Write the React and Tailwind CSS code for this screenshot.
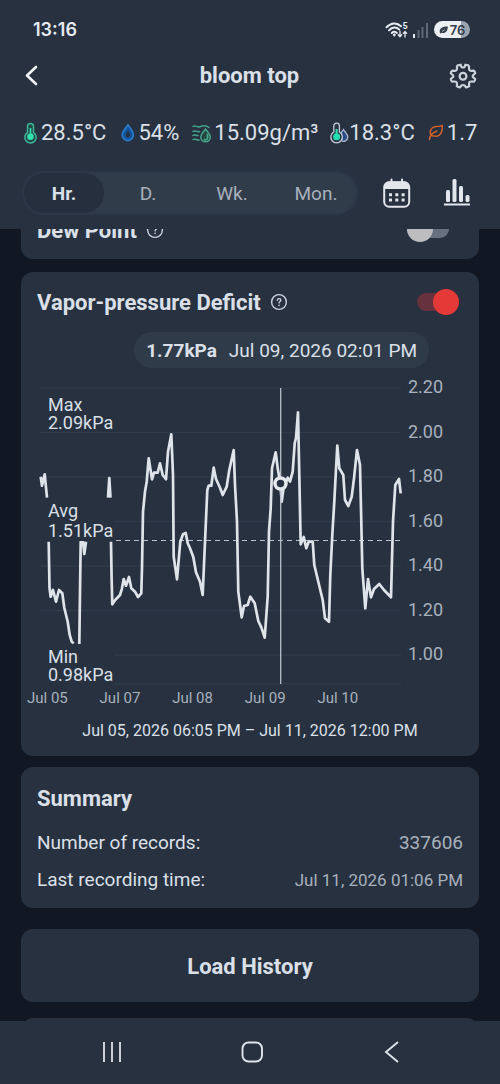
import React from "react";

const Thermometer = () => (
  <svg width="16" height="22" viewBox="0 0 16 22" fill="none">
    <path d="M5.500 10.500V4.500a3 3 0 0 1 6 0v6a5.700 5.700 0 1 1-6 0Z" fill="#1f4a4a" stroke="#3fb393" strokeWidth="1.500" />
    <circle cx="8.500" cy="14.800" r="3.300" fill="#35e0ae" />
    <path d="M8.500 6v8" stroke="#35e0ae" strokeWidth="1.600" />
  </svg>
);

const Drop = () => (
  <svg width="16" height="22" viewBox="0 0 16 22" fill="none">
    <path d="M9 3c2.500 3.500 5.300 6.500 5.300 10a5.500 5.500 0 0 1-11 0C3.300 9.500 6.500 6.500 9 3Z" fill="#15549a" stroke="#2579c9" strokeWidth="1.800" />
    <path d="M9 8.500c1.200 2 2.300 3 2.300 4.600a2.300 2.300 0 0 1-4.600 0c0-1.600 1.100-2.600 2.300-4.600Z" fill="#243245" />
  </svg>
);

const AirMoisture = () => (
  <svg width="19" height="22" viewBox="0 0 19 22" fill="none" stroke="#46a18b" strokeWidth="1.500" strokeLinecap="round">
    <path d="M1 4.500c2.500-1.800 4 1.200 7 .3s5-2.600 9 .7" />
    <path d="M1 9.500c2-1.500 3.500.8 6.500 0" />
    <path d="M1 13.500c1.800-1.300 3 .6 5 0" />
    <path d="M1 17.500c1.800-1.300 3.500.8 6 .6" />
    <path d="M13.500 7c2 3 4.800 5 4.800 8a4.700 4.700 0 0 1-9.600 0c0-3 2.800-5 4.800-8Z" fill="#26463f" />
    <path d="M15.500 12.500v4a2 2 0 0 1-3 1" strokeWidth="1.800" />
  </svg>
);

const DewPointIcon = () => (
  <svg width="15" height="22" viewBox="0 0 15 22" fill="none" className="overflow-visible">
    <path d="M12.500 7.500c2 3 4.300 5 4.300 7.500a4.300 4.300 0 0 1-7 3.300V11c1-1.200 2-2.300 2.700-3.500Z" fill="#2b4d86" stroke="#aebbd0" strokeWidth="1.300" />
    <path d="M2.800 10V4a2.800 2.800 0 0 1 5.600 0v6a5.800 5.800 0 1 1-5.600 0Z" fill="#263445" stroke="#c5ccd6" strokeWidth="1.300" />
    <path d="M5.600 7v7" stroke="#35e0ae" strokeWidth="2" />
    <circle cx="5.600" cy="14.800" r="3.500" fill="#25deb0" />
  </svg>
);

const LeafIcon = () => (
  <svg width="16" height="22" viewBox="0 0 16 22" fill="none" stroke="#cf5f2b" strokeWidth="1.500" strokeLinecap="round" strokeLinejoin="round">
    <path d="M1.500 17.500c0-4 2.500-6.500 7.500-8.500" />
    <path d="M3 13.500C.8 8.500 3.500 5 8 4.600c3 0 4.500-.2 6.200-1.300.6 6-1.500 10.700-6 10.900-2 0-3.200-.2-5.200-.7Z" />
  </svg>
);

const metrics = [
  { label: "Temperature", value: "28.5°C", Icon: Thermometer },
  { label: "Humidity", value: "54%", Icon: Drop },
  { label: "Absolute humidity", value: "15.09g/m³", Icon: AirMoisture },
  { label: "Dew point", value: "18.3°C", Icon: DewPointIcon },
  { label: "Vapor-pressure deficit", value: "1.77kPa", Icon: LeafIcon },
];

const HelpIcon = () => (
  <svg width="18" height="18" viewBox="0 0 18 18" fill="none" stroke="#cdd4de" strokeWidth="1.400" strokeLinecap="round">
    <circle cx="9" cy="9" r="7.400" />
    <path d="M7.300 7.300c.2-2.300 3.500-2.200 3.500-.1 0 1.300-1.700 1.300-1.700 2.700" />
    <path d="M9.100 12.300v.2" strokeWidth="1.600" />
  </svg>
);

function StatusBar() {
  return (
    <div className="flex h-14 items-center justify-between pt-[3px] pl-[33px] pr-[30px]">
      <span className="font-['Inter',sans-serif] text-[18px] font-semibold leading-6 text-[#e6ebf2]">13:16</span>
      <div className="flex items-center gap-[5px]">
        <svg width="23" height="18" viewBox="0 0 23 18" fill="none" stroke="#e8ecf2" strokeLinecap="round">
          <path d="M1.500 6.200C6 1.300 12 1.300 16 5.200M4 9.300c3.200-3.500 7.500-3.500 10.300-.7M6.800 12c1.600-1.600 3.700-1.600 5 0" strokeWidth="2" />
          <circle cx="9.300" cy="14" r="1.400" fill="#e8ecf2" stroke="none" />
          <path d="M15 10.500v5m-1.700-1.700 1.700 1.900 1.700-1.900M20 16v-5.500m-1.700 1.900 1.700-1.900 1.700 1.900" strokeWidth="1.300" />
          <text x="17.500" y="7.500" fill="#e8ecf2" stroke="none" fontFamily="Roboto, sans-serif" fontSize="9" fontWeight="700">5</text>
        </svg>
        <svg width="16" height="18" viewBox="0 0 16 18">
          <rect x="0" y="13" width="2" height="4" fill="#e8ecf2" />
          <rect x="4.500" y="9" width="2" height="8" fill="#5f6977" />
          <rect x="8.500" y="6" width="2" height="11" fill="#5f6977" />
          <rect x="13" y="2" width="2" height="15" fill="#5f6977" />
        </svg>
        <div className="flex h-[17px] w-9 items-center justify-center gap-[2px] rounded-full bg-linear-to-r from-[#eceff3] from-75% to-[#9aa2ae] to-75%">
          <svg width="9" height="8" viewBox="0 0 9 8">
            <path d="M1 7C-.5 3 3 .3 8.800.5 8.800 5.500 6 8 2.300 6.700L1 7.800Z" fill="#353e4b" />
            <path d="M3 5.500 6 3.500" stroke="#eceff3" strokeWidth=".6" />
          </svg>
          <span className="font-['Inter',sans-serif] text-[13px] font-semibold leading-4 text-[#353e4b]">76</span>
        </div>
      </div>
    </div>
  );
}

function Header() {
  return (
    <header className="shrink-0 bg-[#273140] pb-[14px]">
      <StatusBar />
      <div className="flex h-10 items-center justify-between pl-[22px] pr-[23px]">
        <button aria-label="Back" className="flex w-7">
          <svg width="20" height="24" viewBox="0 0 20 24" fill="none" stroke="#f1f4f8" strokeWidth="2.600" strokeLinecap="round" strokeLinejoin="round">
            <path d="M14 3 5 11.500 14 20" />
          </svg>
        </button>
        <h1 className="text-[22px] font-bold leading-7">bloom top</h1>
        <button aria-label="Settings">
          <svg width="28" height="28" viewBox="0 0 28 28" fill="none" stroke="#cbd2dc" strokeWidth="2.200" strokeLinejoin="round">
            <path d="M10 3.200 11.700 2.700 12.400 5Q14 6 15.600 5L16.300 2.700 19.400 3.400Q20.600 4.200 20 6.200 20 9 22.600 8.900L24.800 8.700Q26.200 9.600 26.200 11.200L24.300 13Q23 14.200 24.300 15.400L26.200 17Q26 19 24.800 19.700L22.600 19.500Q20 19.400 20 22L20.200 24Q19 25.400 17.200 25.500L15.600 23.500Q14 22.500 12.400 23.500L10.800 25.500Q9 25.400 7.800 24L8 22Q8 19.400 5.400 19.500L3.200 19.700Q2 19 1.800 17L3.700 15.400Q5 14.200 3.700 13L1.800 11.200Q1.800 9.600 3.200 8.700L5.400 8.900Q8 9 8 6.200 7.400 4.200 8.600 3.400Z" />
            <circle cx="14" cy="14.200" r="3.400" />
          </svg>
        </button>
      </div>
      <ul aria-label="Current readings" className="mx-[22px] mt-[17px] flex h-10 items-center gap-[13px] overflow-hidden">
        {metrics.map(({ label, value, Icon }) => (
          <li key={label} aria-label={label} className="flex shrink-0 items-center gap-[3px] text-[22px] leading-7">
            <Icon />
            {value}
          </li>
        ))}
      </ul>
      <div className="mt-[18px] flex items-center pl-[22px] pr-[29px]">
        <div className="flex h-11 flex-1 rounded-full bg-[#313c4b] inset-ring-2 inset-ring-[#2c3747]">
          <button aria-pressed="true" className="w-1/4 rounded-full border-2 border-transparent bg-[#252f3e] bg-clip-padding pt-[2px] text-[19px] font-bold">Hr.</button>
          <button aria-pressed="false" className="w-1/4 pt-[2px] text-[19px] text-[#a8b0bc]">D.</button>
          <button aria-pressed="false" className="w-1/4 pt-[2px] text-[19px] text-[#a8b0bc]">Wk.</button>
          <button aria-pressed="false" className="w-1/4 pt-[2px] text-[19px] text-[#a8b0bc]">Mon.</button>
        </div>
        <button aria-label="Calendar" className="ml-[25px]">
          <svg width="28" height="30" viewBox="0 0 28 30" fill="none">
            <rect x="1.200" y="4.200" width="25" height="24.500" rx="5" stroke="#e3e6eb" strokeWidth="2" />
            <path d="M1.200 11V8.500a5 5 0 0 1 5-5h15a5 5 0 0 1 5 5V11Z" fill="#e3e6eb" />
            <path d="M8.500 1.500v4M19 1.500v4" stroke="#e3e6eb" strokeWidth="2" strokeLinecap="round" />
            <path d="M6 16.700h3m3.300 0h3m3.300 0h3M6 22h3m3.300 0h3m3.300 0h3" stroke="#e3e6eb" strokeWidth="3" />
          </svg>
        </button>
        <button aria-label="Statistics" className="ml-8">
          <svg width="28" height="30" viewBox="0 0 28 30" fill="#e3e6eb">
            <rect x="3" y="12" width="4" height="12" rx="1.500" />
            <rect x="9.500" y="1" width="4" height="23" rx="1.500" />
            <rect x="16" y="8" width="4" height="16" rx="1.500" />
            <rect x="22.500" y="17" width="4" height="7" rx="1.500" />
            <rect x="1" y="25.500" width="26" height="2" />
          </svg>
        </button>
      </div>
    </header>
  );
}

const gridLines = [0, 44.5, 89, 133.5, 178, 222.5, 267, 296];
const yTicks = ["2.20", "2.00", "1.80", "1.60", "1.40", "1.20", "1.00"];
const xTicks = ["Jul 05", "Jul 07", "Jul 08", "Jul 09", "Jul 10"];

const series = [
  "0.7,88.7 2,97.7 4.7,86.3 7,109.7",
  "8.7,153.7 9.5,200 10.7,208.7 13,202 16,213.7 19,202 22.3,205.3 24.3,219.7 27.7,233.7 29.7,247 31.7,253.7 33.7,255.3",
  "39.3,256 40.7,153.7 43,153.7 44.3,166 46,153.7",
  "68,109.7 69.3,90 70.500,109.7",
  "71,153.7 71.6,190 72.3,216.3 75,212.3 80,207 82,200.3 83.7,191 86,197.7 89,189 91.3,200.3 95,203.7 98,209 101.3,205.3 102,180 103,123.7 105,103.7 106.7,93.7 108.7,70.3 112,91.3 114,84.7 117.7,84.7 120,75.3 122.7,87 126,91.3 128,63.7 131.3,46.3 133,87 133.7,168.7 137,191.3 140.3,153.7 143,146.3 145.7,145 147.7,155.3 150,160.3 153.3,169 156,184.3 160,193.7 162.7,207 165,153.7 167.3,102 168.7,97.7 171.3,97.7 173.7,79.7 176,91 180,99.7 182.7,107 186.7,98.7 189.3,82 193.7,62 195,97 197,133.7 198.3,203.7 201.7,229.3 204,218 207.7,217 210.3,208.7 214.7,215.3 218.3,233 221.3,239.3 224.7,249.7 227.7,208.7 229,143.7 230.7,120.3 232,80.3 235.7,64.3 237.7,80.3 240.3,95.3 241.7,113.7 243.7,98.7 247.7,89.7 250,93.7 252.7,83.7 254.7,55.3 256,50 258,24.3 259.3,87 260.7,156.3 263.7,149 266.3,160.3 268.7,153.7 272.7,153.7 274.3,177 278.3,193.7 282.7,212 285,230.3 289,233.7 290.3,187 292.3,147 294.3,113.7 295.7,87 297.3,57.7 299.3,80.3 303.3,87 305,112 308.3,118 311.7,108.7 314,90.3 317,62 320,77 321.3,133.7 322.3,180.3 325.3,220.3 328,191 331,209.3 334,201 339.3,196 344,202 351,209.3 353,133.7 355.3,97 359,91 360.7,105.3",
];

function Chart() {
  return (
    <div className="mt-5">
      <div className="flex items-start pl-[19px]">
        <div className="relative h-[296px] flex-1">
          <svg role="img" aria-label="Vapor-pressure deficit over time" className="h-full w-full overflow-visible" viewBox="0 0 361 296" preserveAspectRatio="none" fill="none">
            {gridLines.map((y) => (
              <path key={y} d={`M0 ${y}H361`} stroke="#303b4a" strokeWidth="1.500" />
            ))}
            <path d="M76 152.500H361" stroke="#b8c0cb" strokeWidth="1.200" strokeDasharray="5 4" />
            {series.map((points) => (
              <polyline key={points} points={points} stroke="#dfe4ea" strokeWidth="2.700" strokeLinejoin="round" />
            ))}
            <path d="M240.700 0V296" stroke="#b9c1cc" strokeWidth="1.300" />
            <circle cx="240.500" cy="95.500" r="5.500" fill="#273140" stroke="#e6eaef" strokeWidth="3.500" />
          </svg>
          <p className="absolute top-2 left-0 bg-[#273140] pr-px pl-2 text-[18px] leading-[18px]">Max<br />2.09kPa</p>
          <p className="absolute top-[113px] left-0 bg-[#273140] pr-px pl-2 text-[18px] leading-5">Avg<br />1.51kPa</p>
          <p className="absolute top-[260px] left-0 bg-[#273140] pr-px pb-1 pl-2 text-[18px] leading-[18px]">Min<br />0.98kPa</p>
        </div>
        <div className="-mt-[11px] flex h-[287px] w-[78px] flex-col justify-between pl-[7px] text-[18px] leading-5 text-[#a9b1bd]">
          {yTicks.map((t) => (
            <span key={t}>{t}</span>
          ))}
        </div>
      </div>
      <div className="mt-1 flex pr-[89px] pl-[6px] text-[15px] leading-5 text-[#a9b1bd]">
        {xTicks.map((t) => (
          <span key={t} className="w-1/5 whitespace-nowrap">{t}</span>
        ))}
      </div>
      <p className="mt-[11px] text-center text-[16px] leading-6">Jul 05, 2026 06:05 PM – Jul 11, 2026 12:00 PM</p>
    </div>
  );
}

export default function App() {
  return (
    <div className="flex h-screen flex-col bg-[#111823] font-['Roboto',sans-serif] text-[#dbe0e8]">
      <Header />
      <main className="min-h-0 flex-1 overflow-hidden px-[21px]">
        <section className="-mt-[30px] flex items-center justify-between rounded-xl bg-[#273140] py-4 pr-[30px] pl-4">
          <label htmlFor="dew" className="flex h-7 items-center gap-[9px] pt-[2px] text-[22px] font-bold">
            Dew Point <HelpIcon />
          </label>
          <input id="dew" type="checkbox" role="switch" className="relative h-[18px] w-[42px] appearance-none rounded-full bg-[#67707e] before:absolute before:-top-1 before:left-0 before:size-[26px] before:rounded-full before:bg-[#bdbdc0]" />
        </section>

        <section className="mt-[13px] rounded-xl bg-[#273140] pt-4 pb-[13px]">
          <div className="flex items-center justify-between pr-5 pl-4">
            <label htmlFor="vpd" className="flex h-7 items-center gap-[9px] text-[22px] font-bold">
              Vapor-pressure Deficit <HelpIcon />
            </label>
            <input id="vpd" type="checkbox" role="switch" defaultChecked className="relative h-[18px] w-[42px] appearance-none rounded-full bg-[#67313e] before:absolute before:-top-1 before:right-0 before:size-[26px] before:rounded-full before:bg-[#e53938]" />
          </div>
          <div className="mt-4 flex justify-end pr-[50px]">
            <p className="flex h-9 items-center gap-3 rounded-full bg-[#303b4a] px-3 pt-[2px] text-[19px]">
              <strong>1.77kPa</strong>
              <span>Jul 09, 2026 02:01 PM</span>
            </p>
          </div>
          <Chart />
        </section>

        <section className="mt-[11px] rounded-xl bg-[#273140] px-4 pt-4 pb-[14px]">
          <h2 className="text-[22px] font-bold leading-8">Summary</h2>
          <dl className="mt-[14px] flex flex-col gap-[9px] text-[19px] leading-7">
            <div className="flex justify-between">
              <dt>Number of records:</dt>
              <dd className="text-[#a9b1bd]">337606</dd>
            </div>
            <div className="flex justify-between">
              <dt>Last recording time:</dt>
              <dd className="text-[17px] text-[#a9b1bd]">Jul 11, 2026 01:06 PM</dd>
            </div>
          </dl>
        </section>

        <button className="mt-[21px] h-[73px] w-full rounded-xl bg-[#273140] pt-px text-[22px] font-bold">Load History</button>
        <div className="mt-4 h-[73px] rounded-xl bg-[#273140]" />
      </main>

      <nav aria-label="System navigation" className="flex h-[63px] shrink-0 items-center justify-center gap-[112px] bg-[#273140] pb-[2px] pl-1">
        <button aria-label="Recent apps">
          <svg width="28" height="28" viewBox="0 0 28 28" stroke="#dfe4ea" strokeWidth="1.800">
            <path d="M6 4v20M14 4v20M22 4v20" />
          </svg>
        </button>
        <button aria-label="Home">
          <svg width="28" height="28" viewBox="0 0 28 28" fill="none" stroke="#dfe4ea" strokeWidth="1.900">
            <rect x="4.500" y="4.500" width="19.500" height="19" rx="6" />
          </svg>
        </button>
        <button aria-label="Back to previous app">
          <svg width="28" height="28" viewBox="0 0 28 28" fill="none" stroke="#dfe4ea" strokeWidth="1.900">
            <path d="M20 4 8 14l12 10" />
          </svg>
        </button>
      </nav>
    </div>
  );
}
